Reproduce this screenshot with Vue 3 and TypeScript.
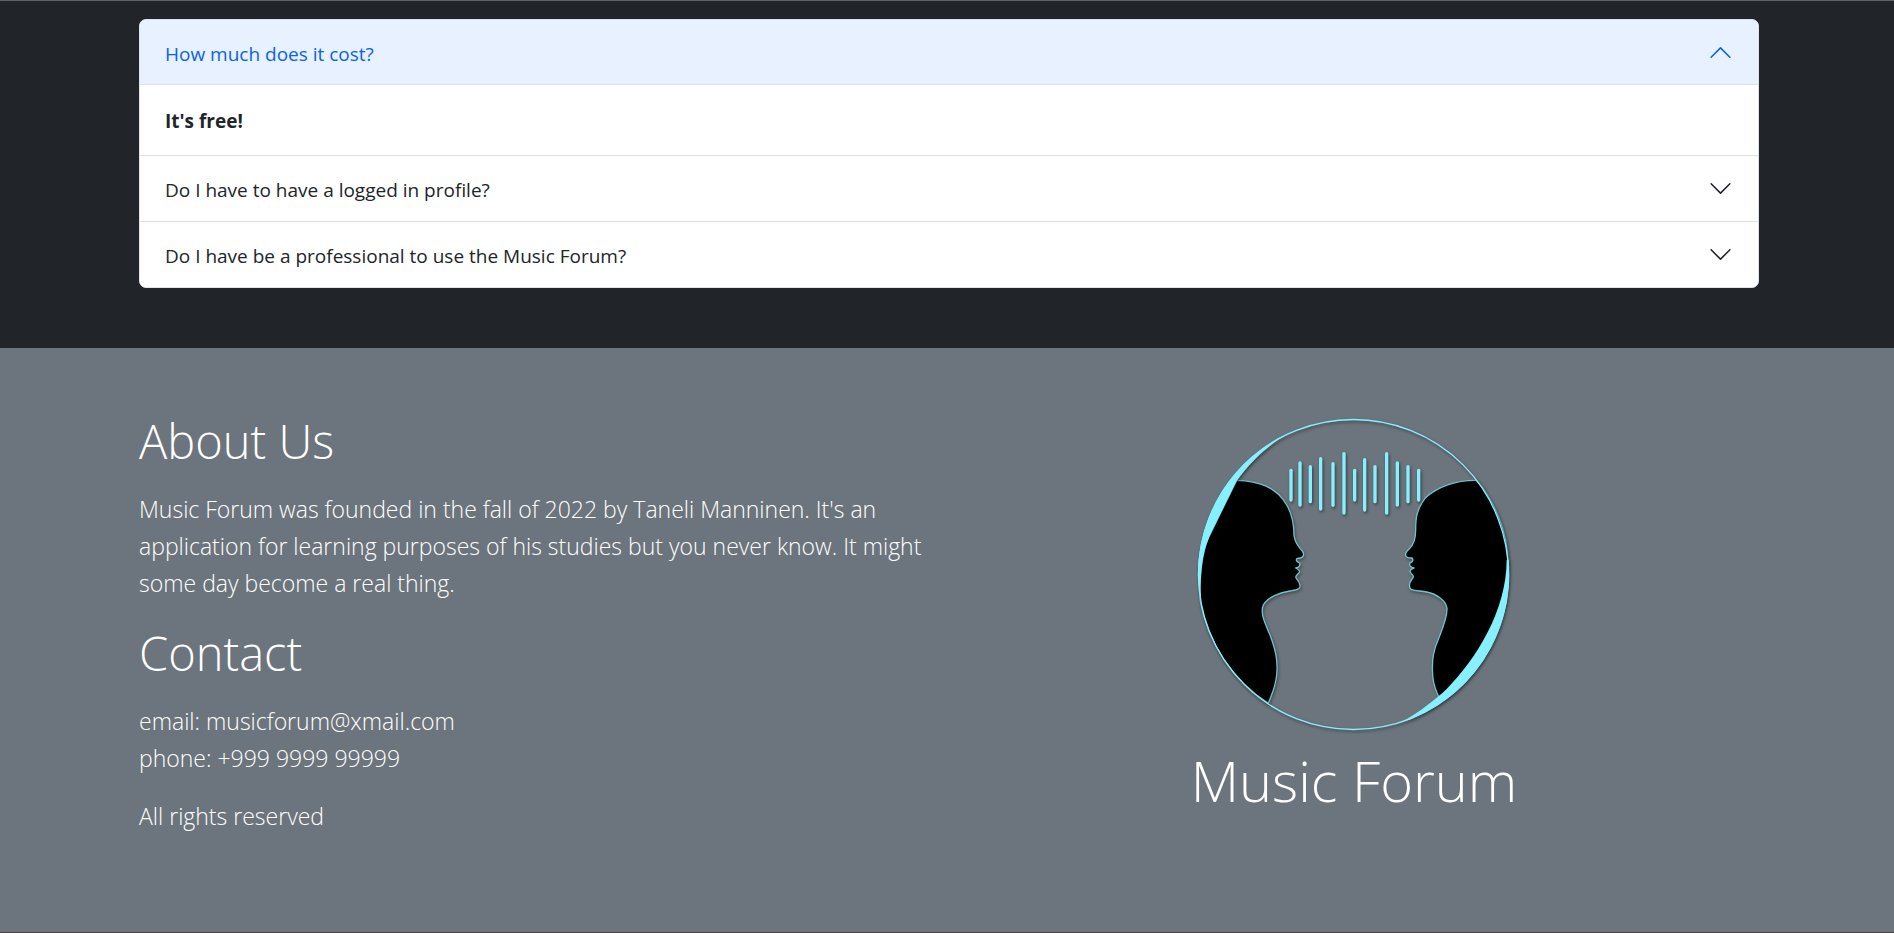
<script setup lang="ts">
import { ref } from 'vue'

interface Question {
  id: string
  title: string
  answer: string
}

interface Bar {
  x: number
  top: number
  bottom: number
}

const questions: Question[] = [
  { id: 'cost', title: 'How much does it cost?', answer: "It's free!" },
  { id: 'profile', title: 'Do I have to have a logged in profile?', answer: 'No' },
  { id: 'professional', title: 'Do I have be a professional to use the Music Forum?', answer: 'No' },
]

const openId = ref<string | null>('cost')

function toggle(id: string): void {
  openId.value = openId.value === id ? null : id
}

const bars: Bar[] = [
  { x: 333, top: 211, bottom: 300 },
  { x: 360, top: 189, bottom: 315 },
  { x: 391, top: 200, bottom: 305 },
  { x: 422, top: 176, bottom: 327 },
  { x: 459, top: 191, bottom: 316 },
  { x: 492, top: 161, bottom: 339 },
  { x: 524, top: 211, bottom: 300 },
  { x: 554, top: 179, bottom: 330 },
  { x: 585, top: 200, bottom: 305 },
  { x: 620, top: 161, bottom: 339 },
  { x: 652, top: 189, bottom: 315 },
  { x: 684, top: 200, bottom: 305 },
  { x: 716, top: 211, bottom: 300 },
]
</script>

<template>
  <div class="page">
    <section class="faq">
      <div class="accordion">
        <div v-for="q in questions" :key="q.id" class="item">
          <h2 class="item-heading">
            <button
              :id="`q-${q.id}`"
              type="button"
              class="toggle"
              :class="{ open: openId === q.id }"
              :aria-expanded="openId === q.id"
              :aria-controls="`a-${q.id}`"
              @click="toggle(q.id)"
            >
              <span>{{ q.title }}</span>
              <svg class="chevron" viewBox="0 0 16 16" aria-hidden="true">
                <path
                  fill="currentColor"
                  d="M1.646 4.646a.5.5 0 0 1 .708 0L8 10.293l5.646-5.647a.5.5 0 0 1 .708.708l-6 6a.5.5 0 0 1-.708 0l-6-6a.5.5 0 0 1 0-.708z"
                />
              </svg>
            </button>
          </h2>
          <div v-if="openId === q.id" :id="`a-${q.id}`" class="answer" role="region" :aria-labelledby="`q-${q.id}`">
            <strong>{{ q.answer }}</strong>
          </div>
        </div>
      </div>
    </section>

    <footer class="about">
      <div class="column">
        <h1 class="title">About Us</h1>
        <p class="lead">
          Music Forum was founded in the fall of 2022 by Taneli Manninen. It's an application for learning purposes of
          his studies but you never know. It might some day become a real thing.
        </p>
        <h1 class="title">Contact</h1>
        <p class="lead">email: musicforum@xmail.com<br />phone: +999 9999 99999</p>
        <p class="lead">All rights reserved</p>
      </div>
      <div class="brand">
        <svg class="logo" viewBox="42 42 960 960" role="img" aria-label="Music Forum logo">
          <g class="heads">
            <path
              d="M170 241C235 243 290 260 322 318C342 355 342 385 342 405C343 425 355 440 367 453C375 464 370 475 352 475C346 480 350 485 359 489C361 497 358 502 347 504C352 507 361 510 358 517C353 524 343 527 349 535C357 545 363 555 359 563C355 570 345 571 330 573C300 577 262 592 250 615C240 640 255 670 270 705C285 745 295 780 290 825C286 865 274 885 265 910A467 467 0 0 1 60 600C58 480 78 425 92 400Z"
            />
            <path
              d="M890 241C830 240 770 260 735 295C710 330 707 350 707 390C707 425 697 438 688 446C670 463 674 475 696 474C702 482 696 487 690 489C686 497 692 502 702 504C688 508 688 514 694 521C702 527 702 532 694 540C688 548 686 560 692 567C700 573 720 572 740 576C770 582 798 602 801 625C802 650 790 680 778 710C760 750 755 780 758 825C760 860 770 875 777 892L800 880C880 800 984 640 984 490C984 390 940 300 890 241Z"
            />
          </g>
          <g class="rings">
            <circle cx="520.5" cy="523.5" r="465" />
            <path
              class="crescent"
              d="M330 97A467 467 0 0 0 54 540L62 600C60 500 72 445 92 402L170 243C210 190 250 145 330 97Z"
            />
            <path
              class="crescent"
              d="M986 480A467 467 0 0 1 660 969C720 935 765 900 800 867C890 776 980 630 980 480Z"
            />
          </g>
          <g class="wave">
            <line v-for="b in bars" :key="b.x" :x1="b.x" :x2="b.x" :y1="b.top" :y2="b.bottom" />
          </g>
        </svg>
        <div class="name">Music Forum</div>
      </div>
    </footer>
  </div>
</template>

<style>
body {
  margin: 0;
  background: #212529;
}
</style>

<style scoped>
.page {
  box-sizing: border-box;
  min-height: 100vh;
  display: flex;
  flex-direction: column;
  border-top: 1px solid #5c636a;
  border-bottom: 1px solid #4b463c;
  background: #212529;
  font-family: 'Segoe UI', 'Open Sans', 'Noto Sans', sans-serif;
  font-weight: 300;
  color: #212529;
}

.faq {
  padding: 18px 135px 60px 139px;
}

.accordion {
  overflow: hidden;
  border: 1px solid #dee2e6;
  border-radius: 7px;
  background: #fff;
}

.item + .item {
  border-top: 1px solid #dee2e6;
}

.item-heading {
  margin: 0;
  font: inherit;
}

.toggle {
  width: 100%;
  display: flex;
  align-items: flex-start;
  justify-content: space-between;
  padding: 20px 25px 16px;
  border: 0;
  background: #fff;
  color: #212529;
  font-family: inherit;
  font-weight: 400;
  font-size: 19px;
  line-height: 29px;
  text-align: left;
  cursor: pointer;
}

.toggle.open {
  background: #e7f1ff;
  color: #0c63e4;
  box-shadow: inset 0 -1px 0 #dee2e6;
}

.chevron {
  width: 25px;
  height: 25px;
  flex: none;
}

.open .chevron {
  transform: rotate(180deg);
}

.answer {
  padding: 21px 25px 19px;
  font-size: 19px;
  line-height: 30px;
}

.answer strong {
  font-weight: 700;
}

.about {
  flex: 1;
  display: grid;
  grid-template-columns: 1fr 1fr;
  padding: 63px 135px 60px 139px;
  background: #6c757d;
  color: #fff;
}

.title {
  margin: 0 0 20px;
  font-size: 47px;
  font-weight: 300;
  line-height: 60px;
}

.lead {
  margin: 0 0 21px;
  font-size: 23px;
  line-height: 37px;
}

.brand {
  display: flex;
  flex-direction: column;
  align-items: center;
}

.logo {
  width: 320px;
  height: 320px;
  margin: 3px 0 10px;
}

.heads path {
  fill: #000;
  stroke: #6fc4d0;
  stroke-width: 4;
  stroke-linejoin: round;
  filter: drop-shadow(3px 5px 4px rgba(0, 0, 0, 0.35));
}

.rings,
.wave {
  filter: drop-shadow(3px 5px 4px rgba(0, 0, 0, 0.5));
}

.rings circle {
  fill: none;
  stroke: #86f0ff;
  stroke-width: 4;
}

.crescent {
  fill: #86f0ff;
}

.wave line {
  stroke: #86f0ff;
  stroke-width: 10;
  stroke-linecap: round;
}

.name {
  font-size: 56px;
  line-height: 72px;
  white-space: nowrap;
}
</style>
